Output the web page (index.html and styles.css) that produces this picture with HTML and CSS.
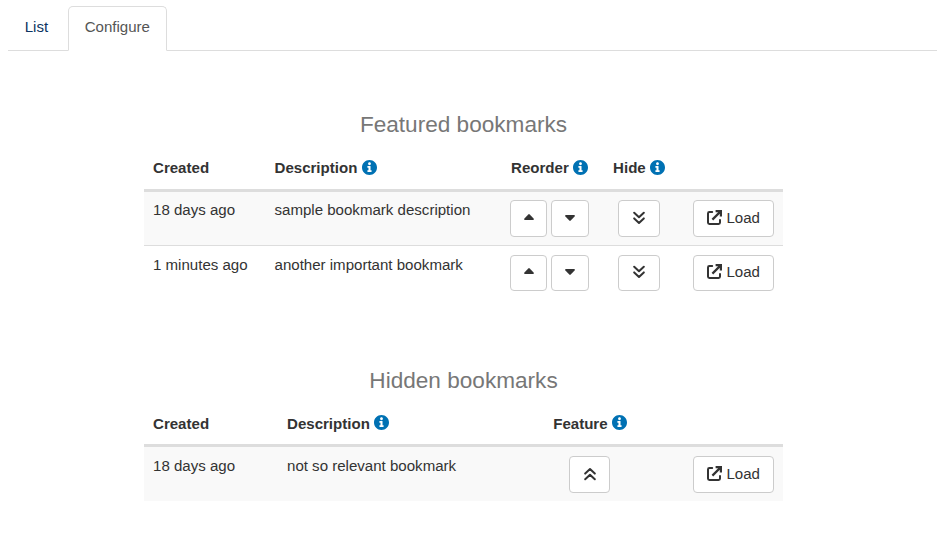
FILE: index.html
```html
<!DOCTYPE html>
<html lang="en">
<head>
<meta charset="utf-8">
<title>Bookmarks</title>
<link rel="stylesheet" href="styles.css">
</head>
<body>
<svg class="defs" aria-hidden="true">
  <symbol id="info" viewBox="8 8 496 496"><path d="M256 8C119.043 8 8 119.083 8 256c0 136.997 111.043 248 248 248s248-111.003 248-248C504 119.083 392.957 8 256 8zm0 78c26 0 46 20 46 46s-20 46-46 46-46-20-46-46 20-46 46-46zm70 306c0 6.627-5.373 12-12 12h-116c-6.627 0-12-5.373-12-12v-32c0-6.627 5.373-12 12-12h24v-84h-24c-6.627 0-12-5.373-12-12v-32c0-6.627 5.373-12 12-12h80c6.627 0 12 5.373 12 12v128h24c6.627 0 12 5.373 12 12z"/></symbol>
  <symbol id="up" viewBox="0 0 10 6"><path d="M4.3.4.4 4.4Q-.3 5.9.9 5.9H9.1Q10.3 5.9 9.6 4.4L5.7.4Q5-.2 4.3.4z"/></symbol>
  <symbol id="down" viewBox="0 0 10 6"><path d="M4.3 5.6.4 1.6Q-.3.1.9.1H9.1Q10.3.1 9.6 1.6L5.7 5.6Q5 6.2 4.3 5.6z"/></symbol>
  <symbol id="down2" viewBox="0 0 12 14"><path class="stroke" d="m1.2 1.7 4.8 4.5 4.8-4.5M1.2 7.4 6 11.9l4.8-4.5"/></symbol>
  <symbol id="up2" viewBox="0 0 12 14"><path class="stroke" d="m1.2 6.6 4.8-4.5 4.8 4.5M1.2 12.3 6 7.8l4.8 4.5"/></symbol>
  <symbol id="external" viewBox="0 0 15 15"><path class="stroke" d="M5.2 2H2.4Q1 2 1 3.4v9.2Q1 14 2.4 14h9.2q1.4 0 1.4-1.4V10"/><path class="arrow" d="M8.6 1.1h5.3v5.3M13.6 1.4 5.4 9.6"/></symbol>
</svg>
<ul class="tabs">
  <li class="tab">List</li>
  <li class="tab active">Configure</li>
</ul>
<main class="content">
  <section class="featured">
    <h2>Featured bookmarks</h2>
    <table>
      <colgroup><col class="f-created"><col class="f-description"><col class="f-reorder"><col class="f-hide"><col></colgroup>
      <thead><tr>
        <th>Created</th>
        <th>Description <svg class="info"><use href="#info"/></svg></th>
        <th class="center">Reorder <svg class="info"><use href="#info"/></svg></th>
        <th class="center">Hide <svg class="info"><use href="#info"/></svg></th>
        <th></th>
      </tr></thead>
      <tbody>
        <tr>
          <td>18 days ago</td><td>sample bookmark description</td>
          <td><div class="actions"><button class="btn move-up"><svg class="caret"><use href="#up"/></svg></button><button class="btn move-down"><svg class="caret"><use href="#down"/></svg></button></div></td>
          <td><div class="actions"><button class="btn hide"><svg class="chevrons"><use href="#down2"/></svg></button></div></td>
          <td><div class="actions end"><button class="btn load"><svg class="external"><use href="#external"/></svg>Load</button></div></td>
        </tr>
        <tr>
          <td>1 minutes ago</td><td>another important bookmark</td>
          <td><div class="actions"><button class="btn move-up"><svg class="caret"><use href="#up"/></svg></button><button class="btn move-down"><svg class="caret"><use href="#down"/></svg></button></div></td>
          <td><div class="actions"><button class="btn hide"><svg class="chevrons"><use href="#down2"/></svg></button></div></td>
          <td><div class="actions end"><button class="btn load"><svg class="external"><use href="#external"/></svg>Load</button></div></td>
        </tr>
      </tbody>
    </table>
  </section>
  <section class="hidden-list">
    <h2>Hidden bookmarks</h2>
    <table>
      <colgroup><col class="h-created"><col class="h-description"><col class="h-feature"><col></colgroup>
      <thead><tr>
        <th>Created</th>
        <th>Description <svg class="info"><use href="#info"/></svg></th>
        <th class="center">Feature <svg class="info"><use href="#info"/></svg></th>
        <th></th>
      </tr></thead>
      <tbody>
        <tr>
          <td>18 days ago</td><td>not so relevant bookmark</td>
          <td><div class="actions"><button class="btn feature"><svg class="chevrons"><use href="#up2"/></svg></button></div></td>
          <td><div class="actions end"><button class="btn load"><svg class="external"><use href="#external"/></svg>Load</button></div></td>
        </tr>
      </tbody>
    </table>
  </section>
</main>
</body>
</html>
```
FILE: styles.css
```css
* { box-sizing: border-box; }
body {
  margin: 0;
  padding: 6px 13px 0 8px;
  background: #fff;
  color: #333;
  font: 15.07px/21px "Liberation Sans", Arial, sans-serif;
}
.defs { position: absolute; width: 0; height: 0; }
.tabs {
  display: flex;
  height: 45px;
  margin: 0;
  padding: 0;
  list-style: none;
  border-bottom: 1px solid #ddd;
}
.tab {
  height: 45px;
  padding: 9px 15.7px;
  border: 1px solid transparent;
  color: #0d3462;
}
.tab:first-child { width: 60px; }
.tab.active {
  width: 99px;
  border-color: #ddd #ddd #fff;
  border-radius: 5px 5px 0 0;
  background: #fff;
  color: #555;
}
.content { width: 639px; margin: 58px 0 0 136px; }
h2 {
  height: 36px;
  margin: 0;
  color: #777;
  font-size: 22.6px;
  font-weight: 400;
  line-height: 31px;
  text-align: center;
}
table {
  width: 100%;
  border-collapse: separate;
  border-spacing: 0;
  table-layout: fixed;
}
th, td { padding: 7px 9px 0; text-align: left; vertical-align: top; }
th { height: 47px; padding-top: 12px; border-bottom: 3px solid #ddd; white-space: nowrap; }
.center { padding-left: 0; padding-right: 0; text-align: center; }
td { height: 53px; }
tbody tr:nth-child(odd) { background: #f9f9f9; }
tbody tr + tr td { height: 55px; padding-top: 8px; border-top: 1px solid #ddd; }
.f-created { width: 121.5px; }
.f-description { width: 235.5px; }
.f-reorder { width: 97px; }
.f-hide { width: 82px; }
.h-created { width: 134px; }
.h-description { width: 264px; }
.h-feature { width: 96px; }
.hidden-list { margin-top: 65px; }
.hidden-list th { height: 46px; }
.hidden-list td { height: 54px; padding-top: 8px; }
.info { width: 15px; height: 15px; fill: #0071b3; vertical-align: -2px; }
.hidden-list .info { vertical-align: -1px; }
.actions { display: flex; justify-content: center; gap: 4px; margin: 1px -9px 0; }
.actions.end { margin-right: 0; justify-content: flex-end; }
.btn {
  display: flex;
  align-items: center;
  justify-content: center;
  flex: none;
  height: 37px;
  padding: 0 0 2px;
  border: 1px solid #ccc;
  border-radius: 4px;
  background: #fff;
  color: #333;
  font: inherit;
}
tr + tr .btn { height: 36px; padding-bottom: 3px; }
.move-up { width: 37px; }
.move-up .caret { margin-bottom: 2px; }
.move-down { width: 38px; }
.move-down .caret { margin-top: 1px; }
.hide { width: 42px; }
.feature { width: 41px; margin-right: 1px; padding-left: 1px; }
.load { width: 81px; gap: 4.5px; }
.caret { width: 10px; height: 6px; fill: #333; }
.chevrons { width: 12px; height: 14px; }
.external { width: 15px; height: 15px; }
.stroke, .arrow { fill: none; stroke: #333; stroke-width: 2; }
.stroke { stroke-linecap: round; stroke-linejoin: round; }
.arrow { stroke-width: 2.2; }
```
